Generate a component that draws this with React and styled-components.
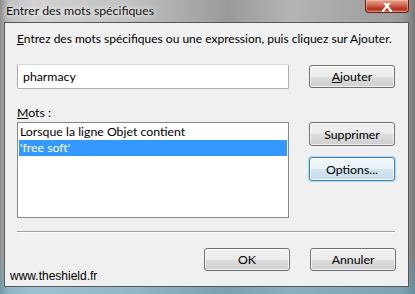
import React from "react";
import styled, { createGlobalStyle, css } from "styled-components";

const GlobalStyle = createGlobalStyle`
  html, body {
    margin: 0;
    padding: 0;
    background: #6b6b6b;
  }
  body {
    font-family: Lato, "Noto Sans", sans-serif;
  }
`;

const Window = styled.div`
  width: 415px;
  height: 294px;
  box-sizing: border-box;
  display: flex;
  flex-direction: column;
  padding: 0 6px 7px 4px;
  background:
    linear-gradient(180deg, rgba(255, 255, 255, 0) 85%, rgba(80, 170, 200, 0.45) 100%),
    linear-gradient(90deg, #8c8c8c 0%, #bdbdbd 2%, #d2d2d2 8%, #c2c2c2 30%, #9a9a9a 55%, #b4b4b4 70%, #a6a6a6 85%, #9c9c9c 97%, #7a7a7a 100%);
  overflow: hidden;
`;

const TitleBar = styled.div`
  height: 22px;
  flex: none;
  display: flex;
  align-items: flex-start;
  justify-content: space-between;
`;

const Title = styled.span`
  font-size: 12.3px;
  line-height: 16px;
  padding: 3px 0 0 2px;
  color: #111;
  text-shadow: 0 0 8px rgba(255, 255, 255, 0.9), 0 0 4px rgba(255, 255, 255, 0.9);
`;

const CloseButton = styled.div`
  width: 42px;
  height: 12px;
  border: 1px solid #5a2219;
  border-top: none;
  border-radius: 0 0 4px 4px;
  background: linear-gradient(180deg, #e8a592 0%, #d2705a 40%, #b8341f 70%, #c9543c 100%);
  display: flex;
  align-items: flex-end;
  justify-content: center;
  box-shadow: inset 0 0 0 1px rgba(255, 200, 180, 0.5);
`;

const Client = styled.div`
  flex: 1;
  position: relative;
  background: #f0f0f0;
  border: 1px solid #575757;
  padding: 8px 12px 0 12px;
  display: flex;
  flex-direction: column;
`;

const Instruction = styled.p`
  margin: 0;
  font-size: 12px;
  line-height: 15px;
  white-space: nowrap;
  color: #000;
`;

const Grid = styled.div`
  margin-top: 18px;
  display: grid;
  grid-template-columns: 272px 86px;
  column-gap: 20px;
  align-items: start;
`;

const TextField = styled.div`
  height: 25px;
  box-sizing: border-box;
  border: 1px solid #abadb3;
  border-top-color: #d8d8d8;
  border-radius: 2px;
  background: #fff;
  font-size: 12.3px;
  line-height: 23px;
  padding-left: 5px;
  color: #000;
`;

const ButtonColumn = styled.div`
  display: flex;
  flex-direction: column;
  gap: ${(p) => p.$gap || 0}px;
  padding-top: ${(p) => p.$top || 0}px;
`;

const Button = styled.div`
  width: 86px;
  height: ${(p) => p.$h || 23}px;
  box-sizing: border-box;
  border: 1px solid #707070;
  border-radius: 3px;
  display: flex;
  align-items: center;
  justify-content: center;
  font-size: 12.3px;
  color: #000;
  background: linear-gradient(180deg, #f2f2f2 0%, #ebebeb 50%, #dddddd 50%, #cfcfcf 100%);
  box-shadow: inset 0 0 0 1px rgba(255, 255, 255, 0.75);
  ${(p) =>
    p.$focus &&
    css`
      border-color: #3c7fb1;
      background: linear-gradient(180deg, #f3f8fb 0%, #e6f1f8 50%, #d6e6f0 50%, #c6dbe8 100%);
      box-shadow: inset 0 0 0 1px rgba(255, 255, 255, 0.8), 0 0 1px 1px rgba(140, 200, 235, 0.6);
    `}
`;

const Label = styled.div`
  margin-top: 16px;
  font-size: 12.3px;
  line-height: 15px;
  color: #000;
`;

const ListBox = styled.div`
  margin-top: 2px;
  height: 96px;
  box-sizing: border-box;
  border: 1px solid #828790;
  background: #fff;
  padding: 1px;
`;

const Item = styled.div`
  height: 16px;
  font-size: 12.3px;
  line-height: 16px;
  padding-left: 1px;
  color: ${(p) => (p.$selected ? "#fff" : "#000")};
  background: ${(p) => (p.$selected ? "#3399ff" : "transparent")};
`;

const Separator = styled.div`
  margin-top: 13px;
  height: 1px;
  background: #a0a0a0;
  border-bottom: 1px solid #fff;
  margin-right: 1px;
`;

const Footer = styled.div`
  margin-top: 15px;
  display: flex;
  justify-content: flex-end;
  gap: 20px;
`;

const Watermark = styled.span`
  position: absolute;
  left: 5px;
  bottom: 3px;
  font-family: "Liberation Sans", Arial, sans-serif;
  font-size: 12px;
  line-height: 14px;
  color: #000;
`;

const Cross = () => (
  <svg width="12" height="9" viewBox="0 0 12 9">
    <path d="M2 -2 L10 8 M10 -2 L2 8" stroke="#fff" strokeWidth="2.2" strokeLinecap="round" />
  </svg>
);

export default function App() {
  return (
    <>
      <GlobalStyle />
      <Window>
        <TitleBar>
          <Title>Entrer des mots spécifiques</Title>
          <CloseButton>
            <Cross />
          </CloseButton>
        </TitleBar>
        <Client>
          <Instruction>
            <u>E</u>ntrez des mots spécifiques ou une expression, puis cliquez sur Ajouter.
          </Instruction>
          <Grid>
            <div>
              <TextField>pharmacy</TextField>
              <Label>
                <u>M</u>ots :
              </Label>
              <ListBox>
                <Item>Lorsque la ligne Objet contient</Item>
                <Item $selected>'free soft'</Item>
              </ListBox>
            </div>
            <div>
              <ButtonColumn $top={1}>
                <Button>
                  <span>
                    <u>A</u>jouter
                  </span>
                </Button>
              </ButtonColumn>
              <ButtonColumn $top={34} $gap={11}>
                <Button $h={24}>Supprimer</Button>
                <Button $h={24} $focus>
                  Options...
                </Button>
              </ButtonColumn>
            </div>
          </Grid>
          <Separator />
          <Footer>
            <Button>OK</Button>
            <Button>Annuler</Button>
          </Footer>
          <Watermark>www.theshield.fr</Watermark>
        </Client>
      </Window>
    </>
  );
}
